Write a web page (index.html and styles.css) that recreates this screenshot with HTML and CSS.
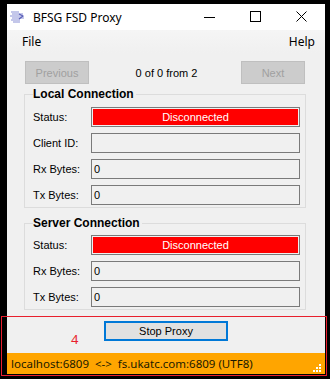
FILE: index.html
```html
<!DOCTYPE html>
<html lang="en">
<head>
    <meta charset="UTF-8">
    <meta name="viewport" content="width=device-width, initial-scale=1.0">
    <title>BFSG FSD Proxy</title>
    <link rel="stylesheet" href="styles.css">
</head>
<body>
    <div class="window">
        <div class="titlebar">
            <svg class="app-icon" width="16" height="14" viewBox="0 0 16 14">
                <path d="M1 2h8M2 4h11M0 6h13M2 8h12M1 10h9M3 12h7" stroke="#8a8fd6" stroke-width="1.2"/>
                <path d="M9 4l4 2-4 3" stroke="#5a5fb8" stroke-width="1.2" fill="none"/>
            </svg>
            <span class="title">BFSG FSD Proxy</span>
            <div class="controls">
                <span class="ctl">
                    <svg width="12" height="12" viewBox="0 0 12 12"><path d="M0 6.5h11" stroke="#000" stroke-width="1"/></svg>
                </span>
                <span class="ctl">
                    <svg width="12" height="12" viewBox="0 0 12 12"><rect x="0.5" y="0.5" width="10" height="10" fill="none" stroke="#000" stroke-width="1"/></svg>
                </span>
                <span class="ctl">
                    <svg width="12" height="12" viewBox="0 0 12 12"><path d="M0.5 0.5l10 10M10.5 0.5l-10 10" stroke="#000" stroke-width="1"/></svg>
                </span>
            </div>
        </div>

        <div class="menubar">
            <span class="menu-item">File</span>
            <span class="menu-item">Help</span>
        </div>

        <div class="content">
            <div class="nav">
                <button class="btn disabled">Previous</button>
                <span class="counter">0 of 0 from 2</span>
                <button class="btn disabled">Next</button>
            </div>

            <div class="group">
                <div class="group-title">Local Connection</div>
                <div class="rows">
                    <div class="row">
                        <span class="label">Status:</span>
                        <div class="field status"><span>Disconnected</span></div>
                    </div>
                    <div class="row">
                        <span class="label">Client ID:</span>
                        <div class="field"></div>
                    </div>
                    <div class="row">
                        <span class="label">Rx Bytes:</span>
                        <div class="field">0</div>
                    </div>
                    <div class="row">
                        <span class="label">Tx Bytes:</span>
                        <div class="field">0</div>
                    </div>
                </div>
            </div>

            <div class="group second">
                <div class="group-title">Server Connection</div>
                <div class="rows">
                    <div class="row">
                        <span class="label">Status:</span>
                        <div class="field status"><span>Disconnected</span></div>
                    </div>
                    <div class="row">
                        <span class="label">Rx Bytes:</span>
                        <div class="field">0</div>
                    </div>
                    <div class="row">
                        <span class="label">Tx Bytes:</span>
                        <div class="field">0</div>
                    </div>
                </div>
            </div>
        </div>

        <div class="actions">
            <button class="btn primary">Stop Proxy</button>
        </div>

        <div class="statusbar">
            <span class="status-text">localhost:6809  &lt;-&gt;  fs.ukatc.com:6809 (UTF8)</span>
            <svg class="grip" width="10" height="10" viewBox="0 0 10 10">
                <rect x="7" y="1" width="2" height="2" fill="#fff"/>
                <rect x="4" y="4" width="2" height="2" fill="#fff"/>
                <rect x="7" y="4" width="2" height="2" fill="#fff"/>
                <rect x="1" y="7" width="2" height="2" fill="#fff"/>
                <rect x="4" y="7" width="2" height="2" fill="#fff"/>
                <rect x="7" y="7" width="2" height="2" fill="#fff"/>
            </svg>
        </div>
    </div>

    <div class="highlight"><span class="highlight-num">4</span></div>
</body>
</html>
```

FILE: styles.css
```css
body {
    margin: 0;
    background-color: #000000;
    font-family: 'Liberation Sans', Arial, sans-serif;
    font-size: 11px;
    color: #000000;
}

.window {
    margin: 4px 0 0 7px;
    width: 318px;
    background-color: #f0f0f0;
}

.titlebar {
    height: 26px;
    background-color: #ffffff;
    display: flex;
    align-items: center;
    font-family: 'Noto Sans', sans-serif;
    font-size: 12px;
}

.app-icon {
    margin-left: 3px;
    margin-right: 7px;
}

.controls {
    margin-left: auto;
    display: flex;
}

.ctl {
    width: 46px;
    height: 26px;
    display: flex;
    align-items: center;
    justify-content: center;
}

.menubar {
    height: 23px;
    display: flex;
    justify-content: space-between;
    align-items: center;
    padding: 0 10px 0 15px;
    background: linear-gradient(#f5f5f5, #f0f0f0);
    font-family: 'Noto Sans', sans-serif;
    font-size: 12px;
}

.content {
    padding: 8px 19px 0 17px;
}

.nav {
    display: flex;
    justify-content: space-between;
    align-items: center;
    height: 23px;
    padding-left: 1px;
    padding-right: 1px;
}

.btn {
    font-family: inherit;
    font-size: 11px;
    padding: 0;
    cursor: pointer;
}

.disabled {
    width: 64px;
    height: 23px;
    background-color: #cccccc;
    border: 1px solid #bfbfbf;
    color: #a0a0a0;
}

.counter {
    padding-left: 3px;
}

.group {
    border: 1px solid #dcdcdc;
    margin-top: 10px;
    padding: 0 5px 2px 8px;
}

.group.second {
    margin-top: 15px;
}

.group-title {
    display: table;
    margin-top: -9px;
    padding: 0 2px 0 0;
    background-color: #f0f0f0;
    font-weight: bold;
    font-size: 12px;
    line-height: 16px;
}

.rows {
    display: flex;
    flex-direction: column;
    gap: 6px;
    margin-top: 5px;
}

.second .rows {
    margin-top: 4px;
}

.row {
    display: flex;
    align-items: center;
    height: 20px;
}

.label {
    width: 58px;
}

.field {
    flex: 1;
    height: 20px;
    box-sizing: border-box;
    border: 1px solid #7a7a7a;
    background-color: #f0f0f0;
    padding-left: 2px;
    line-height: 18px;
}

.field.status {
    padding: 1px;
}

.field.status span {
    display: block;
    height: 16px;
    line-height: 16px;
    background-color: #ff0000;
    color: #ffffff;
    text-align: center;
}

.actions {
    display: flex;
    justify-content: center;
    padding: 11px 0 12px;
}

.primary {
    width: 124px;
    height: 20px;
    background-color: #e1e1e1;
    border: 2px solid #0078d7;
    color: #000000;
}

.statusbar {
    height: 21px;
    background-color: #ffa500;
    display: flex;
    align-items: center;
    padding: 0 3px 0 4px;
    font-family: 'Noto Sans', sans-serif;
    font-size: 11.5px;
}

.status-text {
    white-space: pre;
    color: #1a1a00;
}

.grip {
    margin-left: auto;
    margin-top: 9px;
}

.highlight {
    position: absolute;
    left: 1px;
    top: 316px;
    width: 324px;
    height: 58px;
    border: 1px solid #e81f2d;
}

.highlight-num {
    position: absolute;
    left: 69px;
    top: 13px;
    color: #e81f2d;
    font-family: 'Noto Sans', sans-serif;
    font-size: 13px;
}
```
